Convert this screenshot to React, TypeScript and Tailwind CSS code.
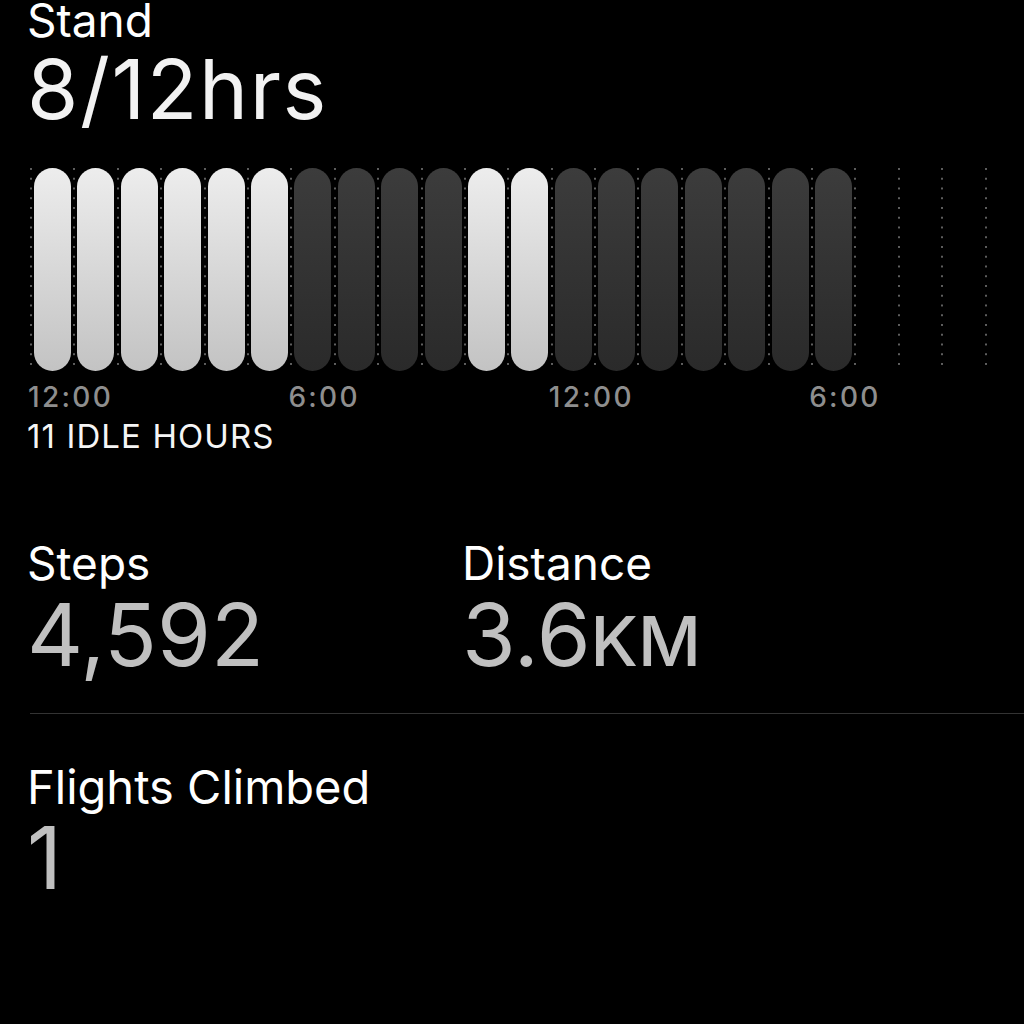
import React from "react";

const light = new Set([0, 1, 2, 3, 4, 5, 10, 11]);

function Column({ index }: { index: number }) {
  const hasBar = index < 19;
  const isLight = light.has(index);
  return (
    <div className="flex h-full">
      <div className="w-[2px] h-full bg-[linear-gradient(to_bottom,#5e5e5e_0,#5e5e5e_2px,transparent_2px)] bg-[length:2px_9.75px]" />
      {hasBar && (
        <div
          className={
            isLight
              ? "ml-[2px] w-[37px] h-full rounded-full bg-linear-to-b from-[#ededed] to-[#c3c3c3]"
              : "ml-[2px] w-[37px] h-full rounded-full bg-linear-to-b from-[#3c3c3c] to-[#2a2a2a]"
          }
        />
      )}
    </div>
  );
}

export default function App() {
  const cols = Array.from({ length: 24 }, (_, i) => i);
  return (
    <div className="w-[1024px] h-[1024px] overflow-hidden bg-black pl-[27px] font-[family-name:Inter,'Noto_Sans',sans-serif] text-white">
      <div className="-mt-[4px] text-[46px] leading-[48px] text-white">Stand</div>
      <div className="mt-[4px] text-[83px] leading-[83px] tracking-[1.6px] text-[#f2f2f2]">8/12hrs</div>

      <div className="mt-[37px] ml-[3px] grid grid-cols-[repeat(24,43.4px)] h-[203px]">
        {cols.map((i) => (
          <Column key={i} index={i} />
        ))}
      </div>

      <div className="mt-[12px] ml-[1px] grid grid-cols-[repeat(4,260.4px)] text-[28px] leading-[28px] font-medium tracking-[2.3px] text-[#8e8e8e]">
        <div>12:00</div>
        <div>6:00</div>
        <div>12:00</div>
        <div>6:00</div>
      </div>

      <div className="mt-[9px] text-[33px] leading-[33px] tracking-[1.1px] text-[#f5f5f5]">11 IDLE HOURS</div>

      <div className="mt-[86px] grid grid-cols-[435px_1fr]">
        <div className="flex flex-col">
          <div className="text-[46px] leading-[48px] text-white">Steps</div>
          <div className="mt-[4px] text-[87px] leading-[87px] text-[#c0c0c0]">4,592</div>
        </div>
        <div className="flex flex-col">
          <div className="text-[46px] leading-[48px] text-white">Distance</div>
          <div className="mt-[4px] text-[87px] leading-[87px] text-[#c0c0c0]">
            3.6<span className="text-[69px] font-medium">KM</span>
          </div>
        </div>
      </div>

      <div className="mt-[28px] ml-[3px] h-px bg-[#333333]" />

      <div className="mt-[48px] text-[47px] leading-[50px] text-white">Flights Climbed</div>
      <div className="mt-[3px] text-[86px] leading-[86px] text-[#c0c0c0]">1</div>
    </div>
  );
}
